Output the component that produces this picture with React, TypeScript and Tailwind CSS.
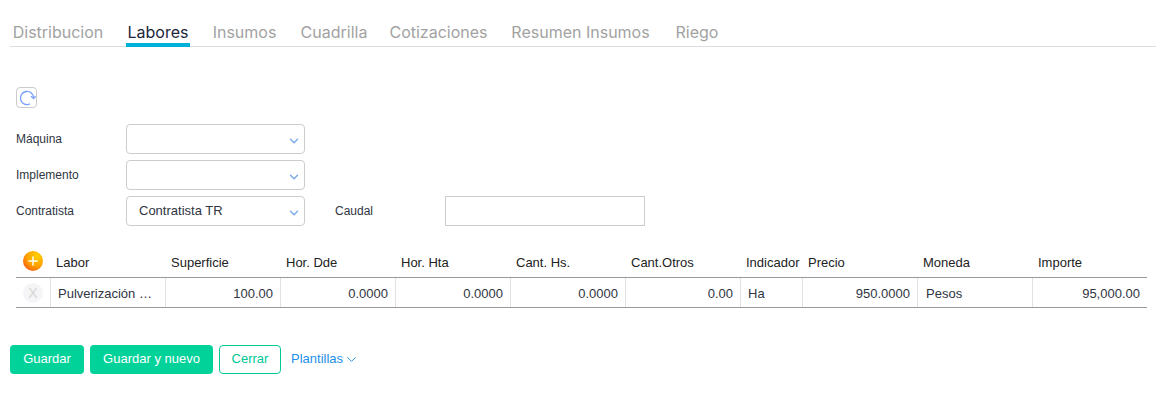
import { ChevronDown, Plus } from "lucide-react";

const tabs = [
  { name: "Distribucion", width: "w-[96px]" },
  { name: "Labores", width: "w-[64px]" },
  { name: "Insumos", width: "w-[69px]" },
  { name: "Cuadrilla", width: "w-[70px]" },
  { name: "Cotizaciones", width: "w-[99px]" },
  { name: "Resumen Insumos", width: "w-[145px]" },
  { name: "Riego", width: "w-[48px]" },
];

const columns = ["Labor", "Superficie", "Hor. Dde", "Hor. Hta", "Cant. Hs.", "Cant.Otros", "Indicador", "Precio", "Moneda", "Importe"];

const gridCols = "grid grid-cols-[34px_115px_115px_115px_115px_115px_115px_62px_115px_115px_115px]";
const leftCell = "flex items-center border-l border-[#e2e2e2] pt-[2px]";
const rightCell = "flex items-center justify-end border-l border-[#e2e2e2] pr-[7px] pt-[2px]";

function Field({ label, value }: { label: string; value?: string }) {
  return (
    <div className="flex h-[30px] items-center">
      <label className="w-[110px] text-xs text-[#2f3542]">{label}</label>
      <div className="flex h-[30px] w-[179px] items-center justify-between rounded-[4px] border border-[#ccc] pl-3 pr-[3px] text-[13px] text-[#2f3542]">
        <span>{value}</span>
        <ChevronDown className="mt-[3px] h-[14px] w-[14px] text-[#7dabea]" strokeWidth={2.5} />
      </div>
    </div>
  );
}

export default function App() {
  return (
    <div className="h-[410px] w-[1166px] overflow-hidden bg-white font-['Liberation_Sans',sans-serif]">
      {/* Tabs */}
      <div className="mx-[10px] flex h-[47px] gap-[20px] border-b border-[#ddd] pt-[20px] font-['Inter',sans-serif] text-[16px] leading-[24px]">
        {tabs.map((tab) => (
          <div
            key={tab.name}
            className={
              tab.name === "Labores"
                ? `${tab.width} mb-[-1px] h-[27px] whitespace-nowrap border-b-[4px] border-[#00b0d8] text-center text-[#20253a]`
                : `${tab.width} mb-[-1px] h-[27px] whitespace-nowrap text-center text-[#a2a2a2]`
            }
          >
            {tab.name}
          </div>
        ))}
      </div>

      {/* Refresh */}
      <div className="ml-[16px] mt-[40px] flex h-[21px] w-[21px] items-center justify-center rounded-[4px] border border-[#ccc]">
        <svg viewBox="0 0 18 18" className="h-[18px] w-[18px]" fill="none" stroke="#7aa0ff" strokeWidth="1.3">
          <path d="M12 14.9A6.6 6.6 0 1 1 15.6 9" />
          <path d="M13 7.2L15.6 9.6L17.6 7.2" />
        </svg>
      </div>

      {/* Form */}
      <div className="ml-[16px] mt-[16px] flex flex-col gap-[6px]">
        <Field label="Máquina" />
        <Field label="Implemento" />
        <div className="flex items-center">
          <Field label="Contratista" value="Contratista TR" />
          <label className="ml-[30px] w-[110px] text-xs text-[#2f3542]">Caudal</label>
          <div className="h-[30px] w-[200px] border border-[#ccc]" />
        </div>
      </div>

      {/* Table */}
      <div className="ml-[16px] mt-[20px] w-[1131px] text-[13px]">
        <div className={`${gridCols} h-[32px] items-center border-b border-[#999] text-[#222]`}>
          <div className="flex justify-center pb-[2px]">
            <div className="flex h-5 w-5 items-center justify-center rounded-full bg-[radial-gradient(circle_at_70%_25%,#ffd000,#ffa000_50%,#f03a20)]">
              <Plus className="h-[14px] w-[14px] text-white" strokeWidth={2.5} />
            </div>
          </div>
          {columns.map((col) => (
            <div key={col} className="pl-[6px] pt-[2px]">
              {col}
            </div>
          ))}
        </div>
        <div className={`${gridCols} h-[30px] border-b border-[#999] text-[#2f3542]`}>
          <div className="flex items-center justify-center">
            <div className="flex h-5 w-5 items-center justify-center rounded-full bg-[#f5f5f7] text-sm text-[#d5d5d5]">X</div>
          </div>
          <div className={`${leftCell} pl-[7px]`}>Pulverización …</div>
          <div className={rightCell}>100.00</div>
          <div className={rightCell}>0.0000</div>
          <div className={rightCell}>0.0000</div>
          <div className={rightCell}>0.0000</div>
          <div className={rightCell}>0.00</div>
          <div className={`${leftCell} pl-[7px]`}>Ha</div>
          <div className={rightCell}>950.0000</div>
          <div className={`${leftCell} pl-[8px]`}>Pesos</div>
          <div className={rightCell}>95,000.00</div>
        </div>
      </div>

      {/* Footer buttons */}
      <div className="ml-[10px] mt-[37px] flex items-center text-[13px]">
        <button className="h-[29px] w-[74px] rounded-[4px] bg-[#00d29a] pb-[2px] text-white">Guardar</button>
        <button className="ml-[6px] h-[29px] w-[123px] rounded-[4px] bg-[#00d29a] pb-[2px] text-white">Guardar y nuevo</button>
        <button className="ml-[6px] h-[29px] w-[62px] rounded-[4px] border border-[#00c896] pb-[2px] text-[#00c896]">Cerrar</button>
        <span className="ml-[10px] flex items-center pb-[2px] text-[#1d8fe8]">
          Plantillas
          <ChevronDown className="ml-[1px] mt-[2px] h-[15px] w-[15px]" strokeWidth={1.5} />
        </span>
      </div>
    </div>
  );
}
